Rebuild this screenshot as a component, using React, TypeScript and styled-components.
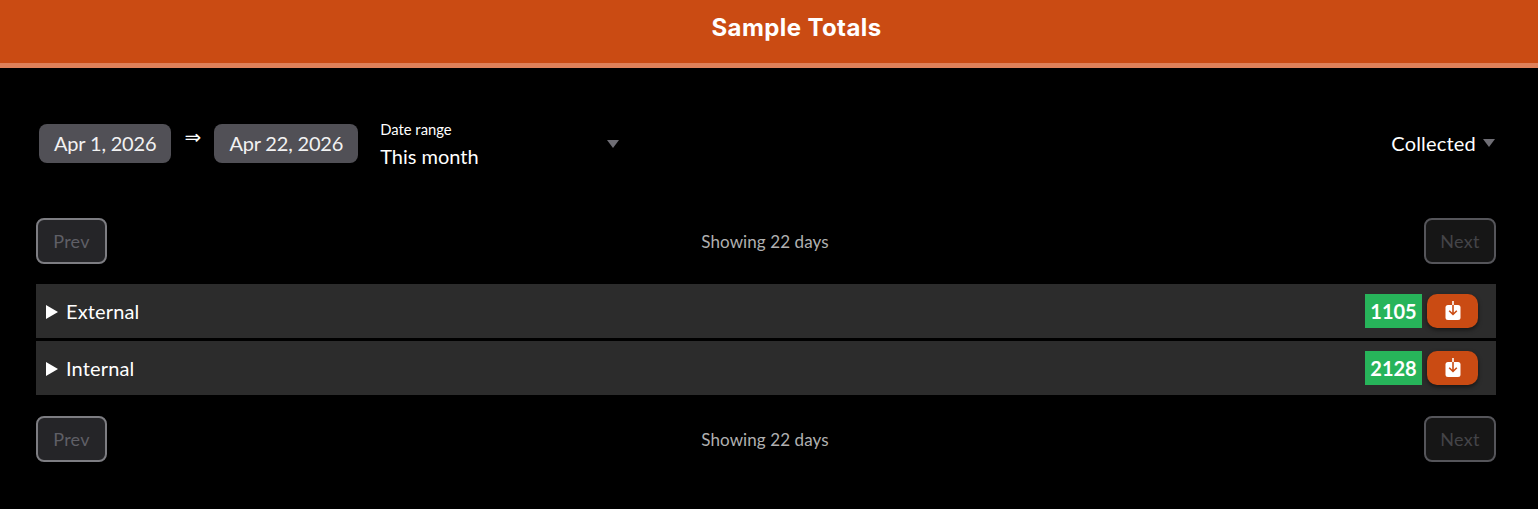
import React from 'react';
import styled, { createGlobalStyle } from 'styled-components';

const GlobalStyle = createGlobalStyle`
  html, body {
    margin: 0;
    background: #000;
    color: #fff;
    font-family: Lato, "Liberation Sans", sans-serif;
  }
`;

const Header = styled.header`
  height: 63px;
  background: #ca4b13;
  border-bottom: 5px solid #df8059;
  display: flex;
  align-items: center;
  justify-content: center;
`;

const Title = styled.h1`
  margin: 0 0 8px 55px;
  font-family: Inter, "Open Sans", sans-serif;
  font-size: 24px;
  font-weight: 700;
  letter-spacing: 0.4px;
  color: #fff;
`;

const Main = styled.main`
  padding: 56px 42px 0 36px;
`;

const Filters = styled.div`
  display: flex;
  align-items: flex-start;
  height: 50px;
  padding-left: 3px;
`;

const DatePill = styled.div`
  height: 39px;
  box-sizing: border-box;
  padding: 0 15px;
  border-radius: 8px;
  background: #515056;
  color: #f2f2f2;
  font-size: 20px;
  letter-spacing: -0.18px;
  line-height: 39px;
  white-space: nowrap;
`;

const Arrow = styled.span`
  width: 43px;
  padding-right: 0;
  text-align: center;
  font-size: 20px;
  line-height: 26px;
  font-family: "DejaVu Sans", sans-serif;
  color: #fff;
`;

const RangeSelect = styled.div`
  width: 239px;
  margin-left: 22px;
  margin-top: -4px;
  display: flex;
  justify-content: space-between;
  align-items: center;
`;

const RangeLabel = styled.div`
  font-size: 14.8px;
  line-height: 18px;
  color: #fff;
`;

const RangeValue = styled.div`
  font-size: 20px;
  line-height: 24px;
  margin-top: 6px;
  color: #fff;
`;

const Caret = styled.span`
  width: 0;
  height: 0;
  border-left: 6.5px solid transparent;
  border-right: 6.5px solid transparent;
  border-top: 8px solid #6f6e75;
`;

const StatusSelect = styled.div`
  margin-left: auto;
  margin-right: 1px;
  display: flex;
  align-items: center;
  gap: 7px;
  height: 38px;
  font-size: 20px;
  letter-spacing: 0.2px;
  color: #fff;
`;

const PagerRow = styled.div<{ $top: number }>`
  display: flex;
  align-items: center;
  justify-content: space-between;
  margin-top: ${(p) => p.$top}px;
`;

const PagerButton = styled.button<{ $dim?: boolean }>`
  width: ${(p) => (p.$dim ? 72 : 71)}px;
  height: 46px;
  box-sizing: border-box;
  border-radius: 8px;
  border: 2px solid ${(p) => (p.$dim ? '#55555a' : '#7d7d82')};
  background: ${(p) => (p.$dim ? '#161616' : '#252528')};
  color: ${(p) => (p.$dim ? '#444448' : '#5f5f66')};
  font-family: inherit;
  font-size: 18px;
  letter-spacing: 0.3px;
  padding: 0;
`;

const PagerText = styled.span`
  font-size: 17px;
  letter-spacing: 0.1px;
  margin-left: -1px;
  color: #b0b0b0;
`;

const Groups = styled.div`
  margin-top: 20px;
  display: flex;
  flex-direction: column;
  gap: 3px;
`;

const GroupRow = styled.div`
  height: 54px;
  background: #2c2c2c;
  display: flex;
  align-items: center;
  padding: 0 18px 0 10px;
`;

const Triangle = styled.span`
  width: 0;
  height: 0;
  margin-top: 1px;
  border-top: 7px solid transparent;
  border-bottom: 7px solid transparent;
  border-left: 12px solid #fff;
  margin-right: 8px;
`;

const GroupName = styled.span`
  font-size: 20px;
  letter-spacing: 0.15px;
  color: #fff;
`;

const Total = styled.span`
  margin-left: auto;
  width: 57px;
  height: 34px;
  background: #27b45a;
  color: #fff;
  font-size: 20px;
  font-weight: 700;
  line-height: 34px;
  text-align: center;
`;

const DownloadButton = styled.button`
  width: 51px;
  height: 34px;
  margin-left: 5px;
  padding: 0;
  border: none;
  border-radius: 10px;
  background: #ca4b13;
  box-shadow: 0 2px 4px rgba(0, 0, 0, 0.5);
  display: flex;
  align-items: center;
  justify-content: center;
`;

const DownloadIcon = () => (
  <svg width="18" height="22" viewBox="0 0 18 22">
    <rect x="1.5" y="5" width="15" height="15" rx="2.5" fill="#fff" />
    <path d="M9 1v4" fill="none" stroke="#fff" strokeWidth="1.6" />
    <path d="M9 5v9.5M5.2 10.8 9 14.5l3.8-3.7" fill="none" stroke="#ca4b13" strokeWidth="1.6" />
  </svg>
);

const Pager = ({ top }: { top: number }) => (
  <PagerRow $top={top}>
    <PagerButton>Prev</PagerButton>
    <PagerText>Showing 22 days</PagerText>
    <PagerButton $dim>Next</PagerButton>
  </PagerRow>
);

const groups = [
  { name: 'External', total: 1105 },
  { name: 'Internal', total: 2128 },
];

export default function App() {
  return (
    <>
      <GlobalStyle />
      <Header>
        <Title>Sample Totals</Title>
      </Header>
      <Main>
        <Filters>
          <DatePill>Apr 1, 2026</DatePill>
          <Arrow>⇒</Arrow>
          <DatePill>Apr 22, 2026</DatePill>
          <RangeSelect>
            <div>
              <RangeLabel>Date range</RangeLabel>
              <RangeValue>This month</RangeValue>
            </div>
            <Caret />
          </RangeSelect>
          <StatusSelect>
            Collected
            <Caret />
          </StatusSelect>
        </Filters>
        <Pager top={44} />
        <Groups>
          {groups.map((g) => (
            <GroupRow key={g.name}>
              <Triangle />
              <GroupName>{g.name}</GroupName>
              <Total>{g.total}</Total>
              <DownloadButton aria-label={`Download ${g.name}`}>
                <DownloadIcon />
              </DownloadButton>
            </GroupRow>
          ))}
        </Groups>
        <Pager top={21} />
      </Main>
    </>
  );
}
